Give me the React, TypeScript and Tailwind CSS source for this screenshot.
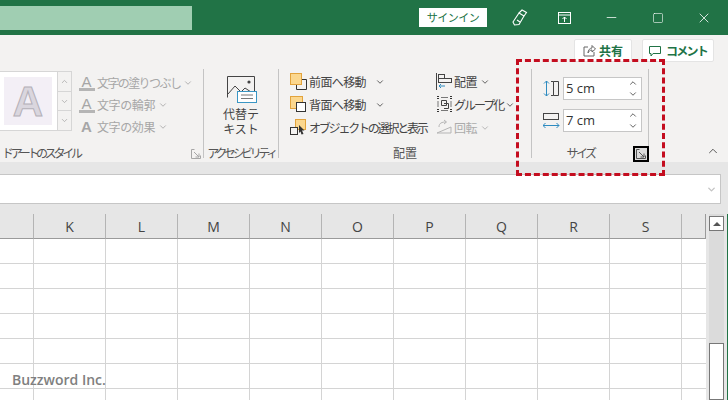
import { ChevronDown, ChevronUp, X, Minus, Square } from "lucide-react";

const jp = "font-['Noto_Sans_CJK_JP','Noto_Sans',sans-serif]";
const columns = ["K", "L", "M", "N", "O", "P", "Q", "R", "S"];
const rows = [0, 1, 2, 3, 4, 5, 6];

function Launcher({ dark }: { dark?: boolean }) {
  return (
    <svg width="10" height="10" viewBox="0 0 10 10" fill="none" stroke={dark ? "#555" : "#a6a6a6"} strokeWidth="1">
      <path d="M3.5 .5H.5V9.5H9.5V6.5M3 3L8 8M8 4.5V8H4.5" />
    </svg>
  );
}

function BringFront() {
  return (
    <svg width="18" height="18" viewBox="0 0 18 18" className="shrink-0">
      <rect x=".5" y=".5" width="11" height="11" fill="#fbd78e" stroke="#e2a33c" />
      <path d="M12 6.5H16.5V16.5H6.5V12" fill="none" stroke="#333" />
    </svg>
  );
}

function SendBack() {
  return (
    <svg width="18" height="18" viewBox="0 0 18 18" className="shrink-0">
      <rect x=".5" y=".5" width="12" height="12" fill="#fbd78e" stroke="#e2a33c" />
      <rect x="6.5" y="6.5" width="9" height="9" fill="#fff" stroke="#333" />
    </svg>
  );
}

function SelectionPane() {
  return (
    <svg width="18" height="18" viewBox="0 0 18 18" className="shrink-0">
      <rect x="5.5" y=".5" width="10" height="10" fill="#fbd78e" stroke="#e2a33c" />
      <rect x=".5" y="8.5" width="7" height="7" fill="#f3f2f1" stroke="#333" />
      <path d="M9 6L14.5 11.5H12L13.5 15L11.5 15.5L10.5 12.5L9 14Z" fill="#333" />
    </svg>
  );
}

function AltTextIcon() {
  return (
    <svg width="32" height="28" viewBox="0 0 32 28" fill="none">
      <path d="M.5 21.5V.5H27.5V15" stroke="#444" />
      <path d="M1 18L8 10L14 16L18 12L24 16" stroke="#444" />
      <circle cx="22" cy="6" r="1.6" fill="#444" />
      <rect x="10.5" y="15.5" width="19" height="11" fill="#fff" stroke="#3a96c4" />
      <path d="M14 19H26M14 22.5H26" stroke="#777" />
    </svg>
  );
}

function AlignIcon() {
  return (
    <svg width="17" height="17" viewBox="0 0 17 17" fill="none" className="shrink-0">
      <path d="M.5 0V17" stroke="#444" />
      <rect x="2.5" y="1.5" width="6" height="4" stroke="#444" />
      <rect x="2.5" y="5.5" width="13" height="4" stroke="#444" />
      <path d="M9 13H3M5 11L3 13L5 15" stroke="#2e8bc0" />
    </svg>
  );
}

function GroupIcon() {
  return (
    <svg width="17" height="17" viewBox="0 0 17 17" fill="none" className="shrink-0">
      <path d="M1 .5H3M1 2.5H3M14 .5H16M14 2.5H16M1 13.5H3M1 15.5H3M14 13.5H16M14 15.5H16" stroke="#333" />
      <path d="M5 1.5H12M5 14.5H12M2 5V11M15 5V11" stroke="#777" />
      <path d="M5.5 4.5H10.5V9.5H5.5ZM8 7.5H12.5V12.5H8" stroke="#444" />
    </svg>
  );
}

function RotateIcon() {
  return (
    <svg width="17" height="17" viewBox="0 0 17 17" fill="none" className="shrink-0" stroke="#b5b5b5">
      <path d="M1 14L15 8V14H1Z" />
      <path d="M3 8C3 4 6 3 10 3M8 1L10.5 3L8 5" />
    </svg>
  );
}

function HeightIcon() {
  return (
    <svg width="17" height="17" viewBox="0 0 17 17" fill="none" className="shrink-0">
      <path d="M3.5 1V16M1 3.5L3.5 1L6 3.5M1 13.5L3.5 16L6 13.5" stroke="#2e8bc0" />
      <path d="M8 1.5H10.5V15.5H8M10.5 1.5H15.5V15.5H10.5" stroke="#444" />
    </svg>
  );
}

function WidthIcon() {
  return (
    <svg width="17" height="17" viewBox="0 0 17 17" fill="none" className="shrink-0">
      <rect x=".5" y="1.5" width="15" height="6" stroke="#444" />
      <path d="M0 13.5H16M2.5 11L0 13.5L2.5 16M13.5 11L16 13.5L13.5 16" stroke="#2e8bc0" />
    </svg>
  );
}

function PenIcon() {
  return (
    <svg width="16" height="17" viewBox="0 0 16 17" fill="none" stroke="#fff" strokeWidth="1.1">
      <path d="M1 13L7 4L12 7L7 15.5L2.5 16Z" />
      <path d="M7 4L10 1L14.5 3.5L12 7M5 11L8 13" />
    </svg>
  );
}

function RibbonDisplayIcon() {
  return (
    <svg width="13" height="12" viewBox="0 0 13 12" fill="none" stroke="#fff">
      <rect x=".5" y=".5" width="12" height="11" />
      <path d="M1 3H12M6.5 10V5M4.5 7L6.5 5L8.5 7" />
    </svg>
  );
}

function ArtRow({ label, outline, tracking }: { label: string; outline?: boolean; tracking: string }) {
  return (
    <div className="flex h-[22px] items-center text-[#a6a6a6]">
      <div className="flex w-[19px] shrink-0 flex-col items-center">
        <span
          className={`font-['Liberation_Sans',sans-serif] text-[15px] leading-[13px] ${outline ? "font-bold" : "font-normal"}`}
        >
          A
        </span>
        <span className={outline ? "h-[2px] w-[16px]" : "h-[3px] w-[16px] bg-[#b5b5b5]"} />
      </div>
      <span className={`ml-[1px] whitespace-nowrap text-[12px] ${tracking}`}>{label}</span>
      <ChevronDown size={10} className="ml-[3px] shrink-0" strokeWidth={2} />
    </div>
  );
}

function ArrangeRow({
  icon,
  label,
  gap,
  tracking,
  muted,
}: {
  icon: React.ReactNode;
  label: string;
  gap: string;
  tracking: string;
  muted?: boolean;
}) {
  return (
    <div className={`flex h-[23px] items-center ${muted ? "text-[#ababab]" : "text-[#444]"}`}>
      {icon}
      <span className={`ml-[1px] whitespace-nowrap text-[12px] ${tracking}`}>{label}</span>
      <ChevronDown size={10} strokeWidth={2} className={`shrink-0 ${gap}`} />
    </div>
  );
}

function SizeField({ icon, value }: { icon: React.ReactNode; value: string }) {
  return (
    <div className="flex items-center gap-[3px]">
      {icon}
      <div className="flex h-[23px] w-[79px] items-center justify-between border border-[#c6c6c6] bg-white pr-[3px] pl-[2px]">
        <span className="font-['Open_Sans',sans-serif] text-[13px] text-[#333]">{value}</span>
        <div className="flex flex-col items-center gap-[1px] text-[#444]">
          <ChevronUp size={10} strokeWidth={2} />
          <ChevronDown size={10} strokeWidth={2} />
        </div>
      </div>
    </div>
  );
}

function GroupLabel({ children, className = "" }: { children: React.ReactNode; className?: string }) {
  return <div className={`mt-auto h-[14px] whitespace-nowrap text-[12px] leading-[17px] text-[#555] ${className}`}>{children}</div>;
}

export default function App() {
  return (
    <div className={`relative flex h-[400px] w-[728px] flex-col overflow-hidden bg-[#e6e6e6] ${jp}`}>
      {/* Title bar */}
      <div className="flex h-[35px] shrink-0 items-center bg-[#217346]">
        <div className="h-[24px] w-[192px] bg-[#a0ceb2]" />
        <div className="ml-[227px] flex h-[19px] w-[68px] items-center justify-center bg-white text-[11px] tracking-[-0.5px] text-[#217346]">
          サインイン
        </div>
        <div className="ml-[25px] flex w-[16px] justify-center">
          <PenIcon />
        </div>
        <div className="ml-[29px] flex w-[14px] justify-center">
          <RibbonDisplayIcon />
        </div>
        <Minus size={15} strokeWidth={1.2} className="ml-[33px] text-white" />
        <Square size={12} strokeWidth={1.2} className="ml-[33px] text-white" />
        <X size={16} strokeWidth={1.2} className="ml-[32px] text-white" />
      </div>

      {/* Ribbon */}
      <div className="flex h-[127px] shrink-0 flex-col bg-[#f3f2f1]">
        <div className="flex h-[34px] items-start justify-end gap-[10px] pt-[4px] pr-[14px]">
          <div className="flex h-[23px] w-[58px] items-center justify-center gap-[3px] rounded-[2px] border border-[#e4e4e4] bg-white text-[12px] font-bold text-[#217346]">
            <svg width="13" height="13" viewBox="0 0 13 13" fill="none" stroke="#666">
              <path d="M5 3H1V12H11V8M5 9C5 6 7 4 9 4V1.5L12.5 5L9 8V6C7 6 6 7 5 9Z" />
            </svg>
            共有
          </div>
          <div className="flex h-[23px] w-[72px] items-center justify-center gap-[3px] rounded-[2px] border border-[#e4e4e4] bg-white text-[12px] font-bold tracking-[-1.8px] text-[#217346]">
            <svg width="12" height="12" viewBox="0 0 12 12" fill="none" stroke="#217346" className="mr-[2px]">
              <path d="M.5 1.5H11.5V8.5H4L2 11V8.5H.5Z" />
            </svg>
            コメント
          </div>
        </div>

        <div className="flex h-[89px]">
          {/* WordArt styles */}
          <div className="relative flex w-[204px] flex-col border-r border-[#c4c4c4]">
            <div className="mt-[2px] flex">
              <div className="flex h-[60px] w-[58px] items-center border border-l-0 border-[#d6d6d6] bg-white pl-[4px]">
                <div className="flex h-[48px] w-[48px] items-center justify-center bg-[#f3eff6] font-['Liberation_Sans',sans-serif] text-[42px] font-bold text-[#dad6de] [-webkit-text-stroke:1px_#b4b0b8]">
                  A
                </div>
              </div>
              <div className="flex h-[60px] w-[14px] flex-col border border-l-0 border-[#d6d6d6] text-[#a6a6a6]">
                <div className="flex flex-1 items-center justify-center border-b border-[#d6d6d6]">
                  <ChevronUp size={9} strokeWidth={2} />
                </div>
                <div className="flex flex-1 items-center justify-center border-b border-[#d6d6d6]">
                  <ChevronDown size={9} strokeWidth={2} />
                </div>
                <div className="flex flex-1 items-center justify-center">
                  <ChevronDown size={9} strokeWidth={2} />
                </div>
              </div>
              <div className="ml-[5px] flex flex-col pt-[1px]">
                <ArtRow label="文字の塗りつぶし" tracking="tracking-[-1.6px]" />
                <ArtRow label="文字の輪郭" tracking="tracking-[-0.4px]" />
                <ArtRow label="文字の効果" outline tracking="tracking-[-0.4px]" />
              </div>
            </div>
            <GroupLabel className="pl-[2px] tracking-[-3.3px]">ドアートのスタイル</GroupLabel>
            <div className="absolute right-[2px] bottom-[-1px]">
              <Launcher />
            </div>
          </div>

          {/* Accessibility */}
          <div className="flex w-[75px] flex-col items-center border-r border-[#c4c4c4]">
            <div className="mt-[7px] ml-[3px]">
              <AltTextIcon />
            </div>
            <div className="mt-[2px] text-center text-[12px] leading-[15px] text-[#444]">
              代替テ
              <br />
              キスト
            </div>
            <GroupLabel className="tracking-[-3.4px]">アクセシビリティ</GroupLabel>
          </div>

          {/* Arrange */}
          <div className="flex w-[253px] flex-col border-r border-[#c4c4c4]">
            <div className="mt-[1px] flex">
              <div className="ml-[11px] flex w-[146px] flex-col">
                <ArrangeRow icon={<BringFront />} label="前面へ移動" gap="ml-[9px]" tracking="tracking-[-0.6px]" />
                <ArrangeRow icon={<SendBack />} label="背面へ移動" gap="ml-[9px]" tracking="tracking-[-0.6px]" />
                <ArrangeRow icon={<SelectionPane />} label="オブジェクトの選択と表示" gap="hidden" tracking="tracking-[-2.2px]" />
              </div>
              <div className="flex flex-col">
                <ArrangeRow icon={<AlignIcon />} label="配置" gap="ml-[3px]" tracking="tracking-[-0.4px]" />
                <ArrangeRow icon={<GroupIcon />} label="グループ化" gap="ml-[2px]" tracking="tracking-[-2px]" />
                <ArrangeRow icon={<RotateIcon />} label="回転" gap="ml-[3px]" tracking="tracking-[-0.4px]" muted />
              </div>
            </div>
            <GroupLabel className="text-center">配置</GroupLabel>
          </div>

          {/* Size */}
          <div className="relative flex w-[117px] flex-col border-r border-[#c4c4c4] pl-[11px]">
            <div className="mt-[8px] flex flex-col gap-[9px]">
              <SizeField icon={<HeightIcon />} value="5 cm" />
              <SizeField icon={<WidthIcon />} value="7 cm" />
            </div>
            <GroupLabel className="-ml-[11px] pr-[19px] text-center tracking-[-2.5px]">サイズ</GroupLabel>
            <div className="absolute right-[-1px] bottom-[-4px] flex h-[16px] w-[16px] items-center justify-center border-2 border-black bg-[#dcdcdc]">
              <Launcher dark />
            </div>
          </div>

          <div className="flex flex-1 items-end justify-end pr-[8px] text-[#444]">
            <ChevronUp size={14} strokeWidth={1.5} />
          </div>
        </div>
      </div>

      {/* Formula bar */}
      <div className="mt-[4px] h-[8px] shrink-0 bg-[#e6e6e6]" />
      <div className="mr-[7px] flex h-[30px] shrink-0 items-center justify-end border border-l-0 border-[#c6c6c6] bg-white pr-[3px] text-[#c4c4c4]">
        <ChevronDown size={11} strokeWidth={3} />
      </div>

      {/* Sheet */}
      <div className="mt-[10px] flex min-h-0 flex-1">
        <div className="grid h-fit w-[706px] shrink-0 grid-cols-[34px_repeat(9,72px)_24px] border-r border-[#9a9a9a]">
          <div className="h-[25px] border-r border-b border-r-[#b4b4b4] border-b-[#9a9a9a]" />
          {columns.map((col) => (
            <div
              key={col}
              className="flex h-[25px] items-center justify-center border-r border-b border-r-[#b4b4b4] border-b-[#9a9a9a] font-['Open_Sans',sans-serif] text-[14px] text-[#444]"
            >
              {col}
            </div>
          ))}
          <div className="h-[25px] border-b border-b-[#9a9a9a]" />
          {rows.map((row) => (
            <div key={row} className="contents">
              <div className="h-[25px] border-r border-b border-[#d4d4d4] bg-white" />
              {columns.map((col) => (
                <div key={col} className="h-[25px] border-r border-b border-[#d4d4d4] bg-white" />
              ))}
              <div className="h-[25px] border-b border-[#d4d4d4] bg-white" />
            </div>
          ))}
        </div>

        {/* Scrollbar */}
        <div className="ml-[3px] flex w-[15px] shrink-0 flex-col bg-[#dbdbdb]">
          <div className="mt-[2px] flex h-[15px] items-center justify-center border border-[#777] bg-white">
            <span className="h-0 w-0 border-x-[4px] border-b-[4px] border-x-transparent border-b-[#555]" />
          </div>
          <div className="h-[112px]" />
          <div className="flex-1 border border-[#777] bg-white" />
        </div>
        <div className="ml-[3px] w-[1px] bg-[#217346]" />
      </div>

      {/* Capture mark-up */}
      <div className="absolute top-[59px] left-[516px] h-[117px] w-[149px] border-[3px] border-dashed border-[#c40d1f]" />
      <div className="absolute top-[369px] left-[12px] font-['Open_Sans',sans-serif] text-[14px] font-semibold text-[#808080]">
        Buzzword Inc.
      </div>
    </div>
  );
}
